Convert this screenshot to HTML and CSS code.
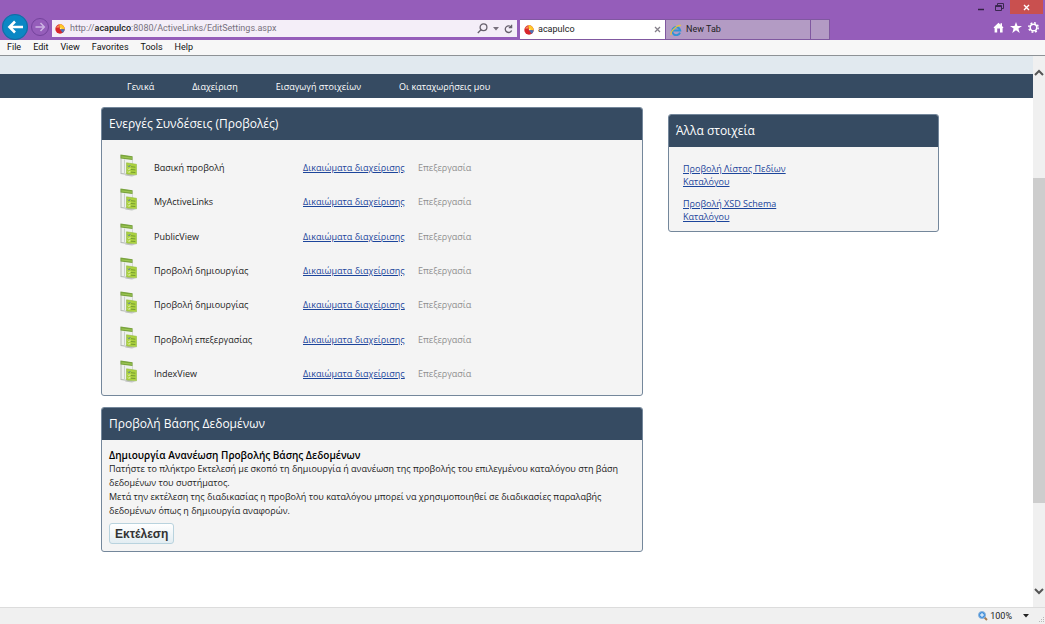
FILE: index.html
```html
<!DOCTYPE html>
<html lang="el">
<head>
<meta charset="utf-8">
<title>acapulco</title>
<link rel="stylesheet" href="styles.css">
</head>
<body>
<svg class="defs" width="0" height="0" aria-hidden="true">
  <symbol id="ball" viewBox="0 0 10 10">
    <circle cx="5" cy="5" r="4.7" fill="#d8262b"/>
    <path d="M5 5 4.2.4A4.7 4.7 0 0 1 9.6 5.6L5 5Z" fill="#ffc928"/>
    <path d="M5 5 9.7 5.3A4.7 4.7 0 0 1 7.6 8.9Z" fill="#4b73b8"/>
    <path d="M1.2 3.8C1.6 2.4 2.9 1.4 4 1.3L4.4 3.6Z" fill="#f58a5a"/>
    <path d="M4.6 4.2 6.6 3.6 6 5.4Z" fill="#fff3b0"/>
  </symbol>
  <symbol id="view" viewBox="0 0 18 23">
    <path d="M.5 1 12.500 2.500V18L12 21.500.500 20Z" fill="#b4bab4"/>
    <path d="M1.500 4 12 5.500V20.500L1.500 19Z" fill="#eef1ee"/>
    <path d="M.5 .5 12.500 2.200V6L.5 4.500Z" fill="#79a43c"/>
    <path d="M1.500 2.200 12 3.500V4.700L1.500 3.400Z" fill="#9cc653"/>
    <path d="M4.500 5.500V19" stroke="#c9cec9" fill="none"/>
    <path d="M6.500 8.800 16.500 10.300V20.800L6.500 20Z" fill="#acd23e" stroke="#94ba45" stroke-width=".6"/>
    <path d="M11 12.700 15.300 13.200M11 15.500 15.300 15.900M11 18.200 15.300 18.500" stroke="#6f9430" stroke-width=".9" fill="none"/>
    <path d="M8 11.700 9 12.700 10.200 11.200" stroke="#4f6fae" fill="none"/>
    <path d="M8 14.700 9 15.700 10.200 14.200M8 17.500 9 18.500 10.200 17" stroke="#e9f3d0" stroke-width=".9" fill="none"/>
    <path d="M6 20.800 16 21.300 12 22.500 5 21.500Z" fill="#bfc2bf"/>
  </symbol>
</svg>

<header class="frame">
  <div class="window-controls">
    <button aria-label="Minimize"><svg width="8" height="8"><path d="M1 6.500H7" stroke="#332244" stroke-width="1.500"/></svg></button>
    <button aria-label="Restore"><svg width="9" height="9" fill="none" stroke="#3a2850"><path d="M2.500 2.500V.5H8.500V5.500H6.500M.5 2.500H6.500V7.500H.5ZM.5 3.500H6.500"/></svg></button>
    <button class="close" aria-label="Close"><svg width="7" height="7"><path d="M1 1 6 6M6 1 1 6" stroke="#fff" stroke-width="1.400"/></svg></button>
  </div>
  <div class="toolbar">
    <button class="nav-button" aria-label="Back"><svg width="26" height="26"><circle cx="13" cy="13" r="13" fill="#0b87c4"/><circle cx="13" cy="13" r="12.500" fill="none" stroke="#1d669f"/><path d="M21 13H8M13 7.500 7.500 13 13 18.500" fill="none" stroke="#fff" stroke-width="2.600"/></svg></button>
    <button class="nav-button forward" aria-label="Forward"><svg width="18" height="18" fill="none"><circle cx="9" cy="9" r="8.500" stroke="#74439c"/><path d="M4.500 9H13M9.500 5 13.300 9 9.500 13" stroke="#cdb4e4" stroke-width="1.500"/></svg></button>
    <div class="address">
      <svg width="10" height="10"><use href="#ball"/></svg>
      <div class="url">
        <input type="text" aria-label="Address">
        <span class="url-text">http://<b>acapulco</b>:8080/ActiveLinks/EditSettings.aspx</span>
      </div>
      <button aria-label="Search"><svg width="11" height="11" fill="none" stroke="#66606c" stroke-width="1.300"><circle cx="6.500" cy="4.300" r="3.400"/><path d="M4 6.800.8 10"/></svg></button>
      <button aria-label="Address options"><svg width="6" height="4"><path d="M0 0H6L3 3.500Z" fill="#77707c"/></svg></button>
      <button aria-label="Refresh"><svg width="9" height="10" fill="none" stroke="#66606c" stroke-width="1.300"><path d="M7.300 3.300A3.300 3.300 0 1 0 7.600 6.500M7.600.8V3.600H4.800"/></svg></button>
    </div>
    <div class="tabs" role="tablist">
      <div class="tab active">
        <svg width="10" height="10"><use href="#ball"/></svg>
        <a href="#" role="tab" aria-selected="true">acapulco</a>
        <button aria-label="Close tab"><svg width="7" height="7"><path d="M1 1 6 6M6 1 1 6" stroke="#85808a" stroke-width="1.300"/></svg></button>
      </div>
      <div class="tab">
        <svg width="12" height="12" fill="none"><path d="M10 8.600A4 4 0 1 1 10.200 6.400H3.400" stroke="#2f93d6" stroke-width="2"/><path d="M1.200 11C-.4 8 7.500.2 11 1.500" stroke="#e8c33c" stroke-width="1.200"/></svg>
        <a href="#" role="tab" aria-selected="false">New Tab</a>
      </div>
      <button class="tab new" aria-label="New tab"></button>
    </div>
    <div class="tools">
      <button aria-label="Home"><svg width="11" height="11"><path d="M.5 5.600 5.500.8 7.500 2.700V1.200H9V4.100L10.500 5.600 9.600 6.300V10.500H7V6.500H4.200V10.500H1.600V6.300Z" fill="#fff"/></svg></button>
      <button aria-label="Favorites"><svg width="12" height="11"><path d="M6 0 7.500 4H12L8.400 6.500 9.700 11 6 8.300 2.300 11 3.600 6.500 0 4H4.500Z" fill="#fff"/></svg></button>
      <button aria-label="Settings"><svg width="11" height="11" fill="none" stroke="#fff"><circle cx="5.500" cy="5.500" r="3.300" stroke-width="1.500"/><circle cx="5.500" cy="5.500" r="4.700" stroke-width="1.500" stroke-dasharray="1.850 1.850"/></svg></button>
    </div>
  </div>
</header>

<nav class="menubar" aria-label="Menu bar">
  <button>File</button><button>Edit</button><button>View</button><button>Favorites</button><button>Tools</button><button>Help</button>
</nav>

<div class="viewport">
  <div class="page">
    <div class="banner"></div>
    <nav class="site-nav" aria-label="Κύριο μενού">
      <a href="#">Γενικά</a><a href="#">Διαχείριση</a><a href="#">Εισαγωγή στοιχείων</a><a href="#">Οι καταχωρήσεις μου</a>
    </nav>
    <main class="content">
      <div class="main-column">
        <section class="panel">
          <h2>Ενεργές Συνδέσεις (Προβολές)</h2>
          <div class="views-body">
            <table class="views">
              <tr><td class="icon"><svg width="18" height="23"><use href="#view"/></svg></td><td class="name">Βασική προβολή</td><td class="rights"><a href="#">Δικαιώματα διαχείρισης</a></td><td class="edit">Επεξεργασία</td></tr>
              <tr><td class="icon"><svg width="18" height="23"><use href="#view"/></svg></td><td class="name">MyActiveLinks</td><td class="rights"><a href="#">Δικαιώματα διαχείρισης</a></td><td class="edit">Επεξεργασία</td></tr>
              <tr><td class="icon"><svg width="18" height="23"><use href="#view"/></svg></td><td class="name">PublicView</td><td class="rights"><a href="#">Δικαιώματα διαχείρισης</a></td><td class="edit">Επεξεργασία</td></tr>
              <tr><td class="icon"><svg width="18" height="23"><use href="#view"/></svg></td><td class="name">Προβολή δημιουργίας</td><td class="rights"><a href="#">Δικαιώματα διαχείρισης</a></td><td class="edit">Επεξεργασία</td></tr>
              <tr><td class="icon"><svg width="18" height="23"><use href="#view"/></svg></td><td class="name">Προβολή δημιουργίας</td><td class="rights"><a href="#">Δικαιώματα διαχείρισης</a></td><td class="edit">Επεξεργασία</td></tr>
              <tr><td class="icon"><svg width="18" height="23"><use href="#view"/></svg></td><td class="name">Προβολή επεξεργασίας</td><td class="rights"><a href="#">Δικαιώματα διαχείρισης</a></td><td class="edit">Επεξεργασία</td></tr>
              <tr><td class="icon"><svg width="18" height="23"><use href="#view"/></svg></td><td class="name">IndexView</td><td class="rights"><a href="#">Δικαιώματα διαχείρισης</a></td><td class="edit">Επεξεργασία</td></tr>
            </table>
          </div>
        </section>
        <section class="panel">
          <h2>Προβολή Βάσης Δεδομένων</h2>
          <div class="database">
            <h3>Δημιουργία Ανανέωση Προβολής Βάσης Δεδομένων</h3>
            <p>Πατήστε το πλήκτρο Εκτελεσή με σκοπό τη δημιουργία ή ανανέωση της προβολής του επιλεγμένου καταλόγου στη βάση δεδομένων του συστήματος.</p>
            <p>Μετά την εκτέλεση της διαδικασίας η προβολή του καταλόγου μπορεί να χρησιμοποιηθεί σε διαδικασίες παραλαβής δεδομένων όπως η δημιουργία αναφορών.</p>
            <button class="run">Εκτέλεση</button>
          </div>
        </section>
      </div>
      <aside class="panel other">
        <h2>Άλλα στοιχεία</h2>
        <ul>
          <li><a href="#">Προβολή Λίστας Πεδίων Καταλόγου</a></li>
          <li><a href="#">Προβολή XSD Schema Καταλόγου</a></li>
        </ul>
      </aside>
    </main>
  </div>
  <div class="scrollbar">
    <button aria-label="Scroll up"><svg width="10" height="7"><path d="M1 6 5 2 9 6" fill="none" stroke="#555" stroke-width="2"/></svg></button>
    <div class="track"><div class="thumb"></div></div>
    <button aria-label="Scroll down"><svg width="10" height="7"><path d="M1 1 5 5 9 1" fill="none" stroke="#555" stroke-width="2"/></svg></button>
  </div>
</div>

<footer class="statusbar">
  <button class="zoom"><svg width="10" height="10"><path d="M6 6 9 9" stroke="#a67b52" stroke-width="2"/><circle cx="4" cy="4" r="3.500" fill="#3e8fdc" stroke="#8fb5dc"/><path d="M2 4H6M4 2V6" stroke="#fff"/></svg>100%<svg class="caret" width="6" height="4"><path d="M0 0H6L3 3.500Z" fill="#222"/></svg></button>
  <svg class="grip" width="7" height="7" fill="#b8b8b8"><path d="M5 0h1v1h-1zM3 2h1v1h-1zM5 2h1v1h-1zM1 4h1v1h-1zM3 4h1v1h-1zM5 4h1v1h-1z"/></svg>
</footer>
</body>
</html>
```
FILE: styles.css
```css
* {
  box-sizing: border-box;
}

body {
  display: flex;
  flex-direction: column;
  min-height: 100vh;
  margin: 0;
  font: 9px/13px "Open Sans", sans-serif;
  color: #222;
  background: #fff;
}

button {
  display: flex;
  align-items: center;
  justify-content: center;
  padding: 0;
  border: 0;
  background: none;
  font: inherit;
  color: inherit;
}

svg {
  display: block;
  flex: none;
}

.defs {
  position: absolute;
}

/* Browser frame */
.frame,
.menubar,
.statusbar {
  font-family: Roboto, "Open Sans", sans-serif;
}

.frame {
  height: 40px;
  background: #955dba;
}

.window-controls {
  display: flex;
  justify-content: flex-end;
  height: 14px;
  padding-right: 2px;
}

.window-controls button {
  width: 19px;
}

.window-controls .close {
  width: 33px;
  margin-left: 1px;
  background: #c9504f;
}

.toolbar {
  display: flex;
  align-items: flex-end;
  height: 26px;
  padding-left: 2px;
}

.nav-button {
  align-self: center;
}

.forward {
  margin: 0 3px;
}

.address {
  display: flex;
  align-items: center;
  flex: 1;
  max-width: 465px;
  height: 17px;
  margin-bottom: 3px;
  padding: 0 4px 0 3px;
  gap: 5px;
  background: #f4eef8;
}

.url {
  position: relative;
  flex: 1;
  height: 17px;
  color: #77717d;
}

.url input {
  width: 100%;
  height: 100%;
  padding: 0;
  border: 0;
  background: none;
  font: inherit;
}

.url-text {
  position: absolute;
  inset: 2px 0 auto;
  pointer-events: none;
}

.url b {
  font-weight: 500;
  color: #222;
}

.tabs {
  display: flex;
  margin-left: 3px;
  height: 21px;
}

.tab {
  display: flex;
  align-items: center;
  gap: 4px;
  width: 145px;
  padding: 0 4px;
  border: 1px solid #8058a0;
  border-left: 0;
  background: #b39bc4;
}

.tab a {
  flex: 1;
  color: #222;
  text-decoration: none;
}

.tab.active {
  width: 146px;
  background: #fff;
}

.tab.new {
  width: 19px;
}

.tools {
  display: flex;
  align-items: center;
  gap: 6px;
  margin: 0 6px 7px auto;
}

.menubar {
  display: flex;
  gap: 12px;
  height: 16px;
  padding: 0 7px;
  border-bottom: 1px solid #8e9296;
  background: #f7f7f7;
  color: #111;
}

/* Page area */
.viewport {
  display: flex;
  flex: 1;
}

.page {
  flex: 1;
}

.banner {
  height: 18px;
  background: #e1e9ef;
}

.site-nav {
  display: flex;
  align-items: center;
  gap: 38px;
  height: 24px;
  padding-left: 127px;
  background: #364b62;
}

.site-nav a {
  color: #fff;
  text-decoration: none;
}

.content {
  display: grid;
  grid-template-columns: 2fr 1fr;
  align-items: start;
  gap: 25px;
  padding: 9px 94px 20px 101px;
}

.main-column {
  display: grid;
  gap: 11px;
}

.panel {
  border: 1px solid #74879b;
  border-radius: 3px;
  background: #f4f4f4;
  overflow: hidden;
}

.panel h2 {
  margin: 0;
  padding: 6px 7px;
  font-size: 12px;
  line-height: 20px;
  font-weight: 400;
  color: #fff;
  background: #364b62;
}

.other {
  margin-top: 7px;
}

.panel a {
  color: #1c459b;
}

.views-body {
  padding: 10px 0 4px 18px;
}

.views {
  width: 100%;
  height: 241px;
  border-collapse: collapse;
  table-layout: fixed;
}

.views td {
  padding: 0;
}

.views .icon {
  width: 34px;
}

.views .icon svg {
  margin-bottom: 4px;
}

.views .name {
  width: 149px;
}

.views .rights {
  width: 115px;
}

.views .edit {
  color: #8f8f8f;
}

.database {
  padding: 8px 20px 7px 7px;
}

.database h3 {
  margin: 0;
  font-size: 10px;
  line-height: 14px;
  font-weight: 600;
  color: #000;
}

.database p {
  margin: 0;
  line-height: 14px;
}

.run {
  height: 21px;
  margin-top: 5px;
  padding: 0 5px;
  border: 1px solid #b9d3de;
  border-radius: 3px;
  background: linear-gradient(#fff, #e3edf2);
  font: bold 12px/18px "Liberation Sans", Arial, sans-serif;
  color: #333;
}

.other ul {
  display: grid;
  gap: 9px;
  width: 138px;
  margin: 0;
  padding: 15px 14px 8px;
  list-style: none;
}

/* Scroll bar */
.scrollbar {
  display: flex;
  flex-direction: column;
  width: 12px;
  padding: 10px 0;
  background: #f0f0f0;
}

.scrollbar button {
  height: 12px;
}

.track {
  display: flex;
  flex-direction: column;
  flex: 1;
}

.track::before {
  content: "";
  flex: 100;
}

.track::after {
  content: "";
  flex: 82;
}

.thumb {
  flex: 325;
  background: #cdcdcd;
}

/* Status bar */
.statusbar {
  display: flex;
  justify-content: flex-end;
  height: 17px;
  border-top: 1px solid #dcdcdc;
  background: #f0f0f0;
}

.zoom {
  gap: 2px;
}

.caret {
  margin: 0 9px;
}

.grip {
  align-self: flex-end;
}
```
